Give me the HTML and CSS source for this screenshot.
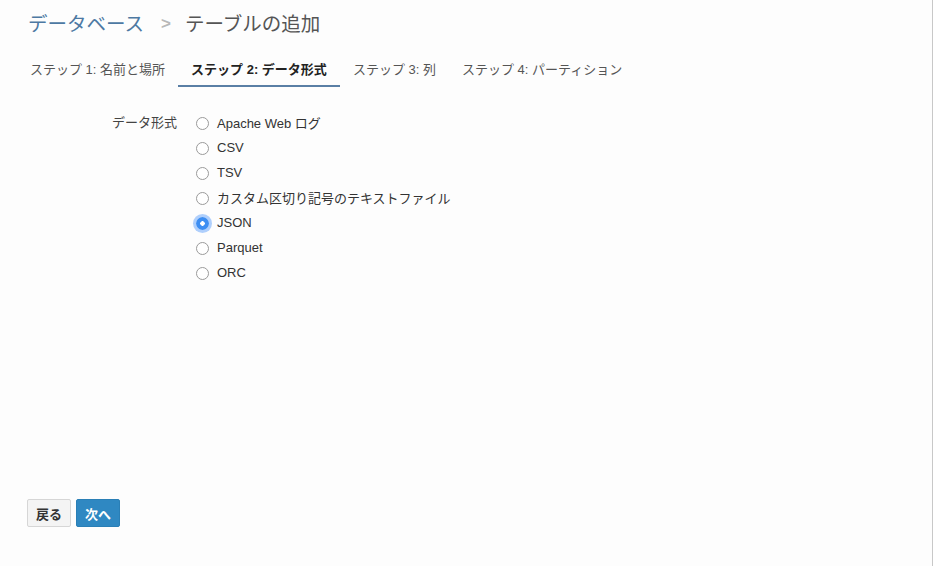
FILE: index.html
```html
<!DOCTYPE html>
<html lang="ja">
<head>
<meta charset="utf-8">
<title>テーブルの追加</title>
<link rel="stylesheet" href="styles.css">
</head>
<body>
<div class="page">
  <div class="content">
    <h1 class="title"><a class="crumb">データベース</a><span class="sep">&gt;</span><span class="current">テーブルの追加</span></h1>
    <nav class="tabs">
      <span class="tab">ステップ 1: 名前と場所</span>
      <span class="tab active">ステップ 2: データ形式</span>
      <span class="tab">ステップ 3: 列</span>
      <span class="tab">ステップ 4: パーティション</span>
    </nav>
    <div class="form">
      <div class="field-label">データ形式</div>
      <div class="options">
        <label class="option"><span class="radio"></span>Apache Web ログ</label>
        <label class="option"><span class="radio"></span>CSV</label>
        <label class="option"><span class="radio"></span>TSV</label>
        <label class="option"><span class="radio"></span>カスタム区切り記号のテキストファイル</label>
        <label class="option"><span class="radio checked"></span>JSON</label>
        <label class="option"><span class="radio"></span>Parquet</label>
        <label class="option"><span class="radio"></span>ORC</label>
      </div>
    </div>
    <div class="actions">
      <button class="btn btn-default">戻る</button>
      <button class="btn btn-primary">次へ</button>
    </div>
  </div>
  <div class="edge"></div>
</div>
</body>
</html>
```

FILE: styles.css
```css
html, body {
  margin: 0;
  padding: 0;
  height: 100%;
  background: #fdfdfd;
  font-family: "Liberation Sans", "Noto Sans CJK JP", sans-serif;
  font-size: 13px;
  color: #333;
}

.page {
  display: flex;
  height: 566px;
}

.content {
  flex: 1;
  display: flex;
  flex-direction: column;
  padding: 0 0 0 17px;
}

.edge {
  width: 1px;
  background: #c8c8c8;
}

.title {
  margin: 0;
  padding: 9px 0 0 11px;
  height: 30px;
  font-size: 19.5px;
  font-weight: normal;
  line-height: 26px;
  display: flex;
  align-items: center;
}

.crumb {
  color: #4d79a3;
}

.sep {
  color: #b8b8b8;
  font-size: 17px;
  font-weight: bold;
  margin: 0 14px 0 17px;
}

.current {
  color: #555;
}

.tabs {
  display: flex;
  margin-top: 18px;
}

.tab {
  padding: 0 13px;
  height: 30px;
  line-height: 26px;
  color: #555;
  border-bottom: 2px solid transparent;
  box-sizing: border-box;
  white-space: nowrap;
}

.tab.active {
  font-weight: bold;
  color: #222;
  border-bottom-color: #5a7fa5;
}

.form {
  display: flex;
  margin-top: 23px;
}

.field-label {
  width: 179px;
  text-align: right;
  color: #444;
  line-height: 25px;
  padding-right: 19px;
  box-sizing: border-box;
}

.options {
  display: flex;
  flex-direction: column;
}

.option {
  display: flex;
  align-items: center;
  height: 25px;
  color: #333;
}

.radio {
  width: 13px;
  height: 13px;
  border: 1px solid #9a9a9a;
  border-radius: 50%;
  box-sizing: border-box;
  background: #fff;
  margin-right: 8px;
  margin-top: 1px;
}

.radio.checked {
  border: none;
  background: radial-gradient(circle, #fff 0 2px, #3d8ef2 2.5px);
  box-shadow: 0 0 0 3px rgba(80, 150, 250, 0.45);
}

.actions {
  display: flex;
  gap: 5px;
  margin-top: auto;
  margin-bottom: 39px;
  padding-left: 10px;
}

.btn {
  font-family: inherit;
  font-size: 13px;
  font-weight: bold;
  height: 28px;
  padding: 0 8px;
  border-radius: 2px;
  cursor: pointer;
}

.btn-default {
  background: #f4f4f4;
  border: 1px solid #d6d6d6;
  color: #333;
}

.btn-primary {
  background: #2f88c2;
  border: 1px solid #2a7fb6;
  color: #fff;
}
```
